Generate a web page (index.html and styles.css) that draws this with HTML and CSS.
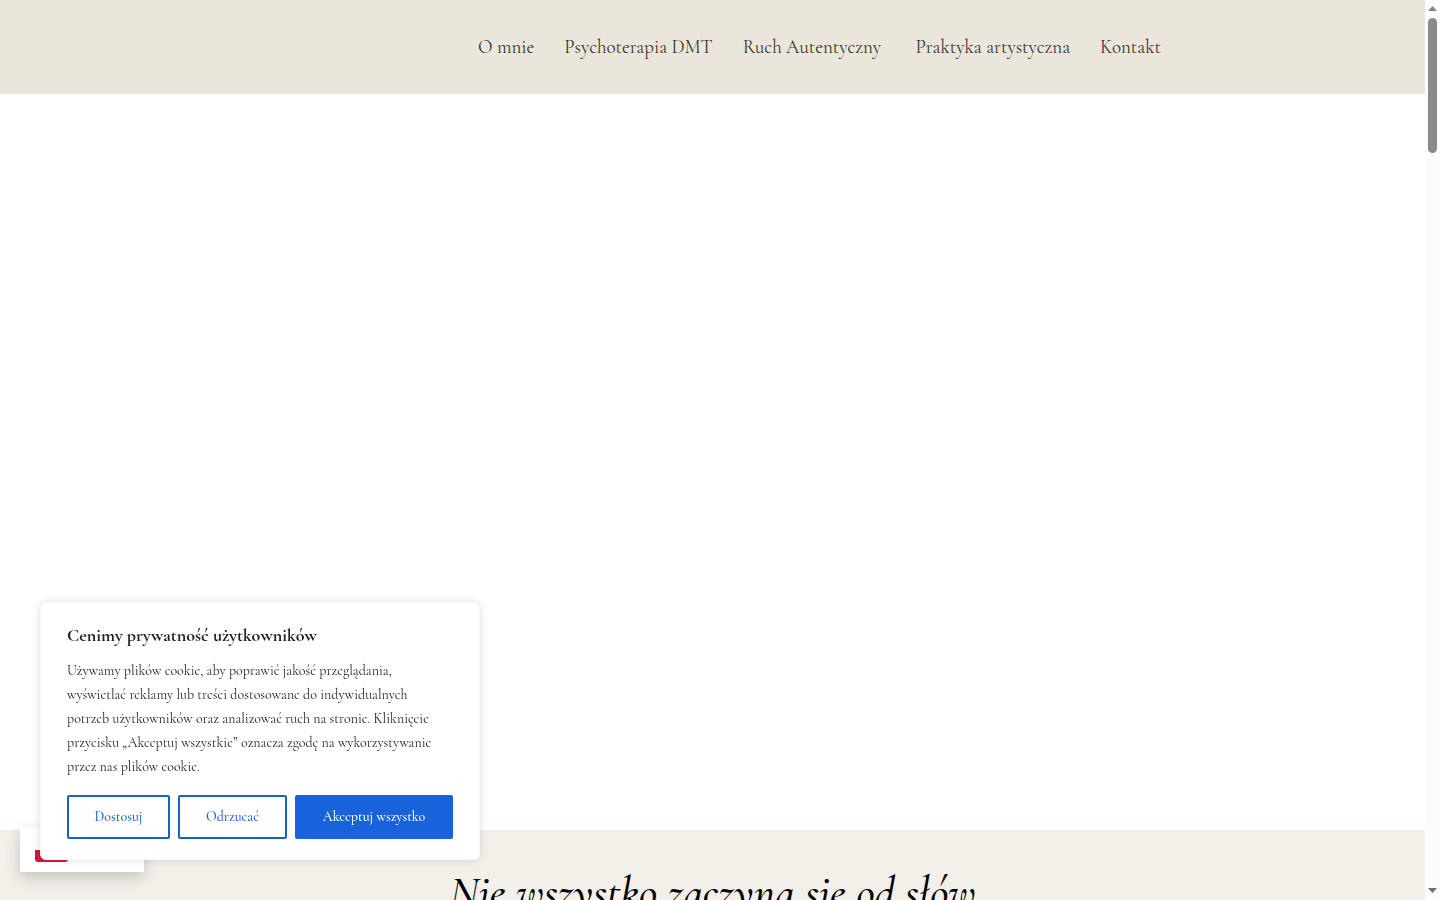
FILE: index.html
```html
<!DOCTYPE html>
<html lang="pl">
<head>
<meta charset="utf-8">
<title>Psychoterapia DMT</title>
<link rel="stylesheet" href="styles.css">
</head>
<body>
<div class="page">
  <header class="site-header">
    <nav class="menu" aria-label="Menu główne">
      <a href="#">O mnie</a>
      <a href="#">Psychoterapia DMT</a>
      <a href="#">Ruch Autentyczny&nbsp;</a>
      <a href="#">Praktyka artystyczna</a>
      <a href="#">Kontakt</a>
    </nav>
  </header>
  <main class="main">
    <div class="hero"></div>
    <section class="intro">
      <h1>Nie wszystko zaczyna się od słów</h1>
    </section>
  </main>
</div>
<div class="scrollbar" aria-hidden="true">
  <svg width="15" height="15" viewBox="0 0 15 15"><path d="M3 11L7.500 6L12 11Z" fill="#858585"/></svg>
  <div class="thumb"></div>
  <svg class="down" width="15" height="15" viewBox="0 0 15 15"><path d="M3 3L7.500 8L12 3Z" fill="#707070"/></svg>
</div>
<aside class="language">
  <svg width="33" height="24" viewBox="0 0 33 24"><rect width="33" height="24" rx="3" fill="#fff"/><path d="M0 12H33V21Q33 24 30 24H3Q0 24 0 21Z" fill="#dc143c"/></svg>
</aside>
<section class="consent" aria-labelledby="consent-title">
  <h2 id="consent-title">Cenimy prywatność użytkowników</h2>
  <p>Używamy plików cookie, aby poprawić jakość przeglądania,<br>wyświetlać reklamy lub treści dostosowane do indywidualnych<br>potrzeb użytkowników oraz analizować ruch na stronie. Kliknięcie<br>przycisku „Akceptuj wszystkie” oznacza zgodę na wykorzystywanie<br>przez nas plików cookie.</p>
  <div class="actions">
    <button type="button">Dostosuj</button>
    <button type="button">Odrzucać</button>
    <button type="button" class="primary">Akceptuj wszystko</button>
  </div>
</section>
</body>
</html>
```
FILE: styles.css
```css
* { box-sizing: border-box; }
body {
  margin: 0;
  height: 100vh;
  overflow: hidden;
  display: flex;
  background: #fff;
  font-family: "Cormorant Garamond", Cormorant, "Liberation Serif", serif;
}
.page {
  flex: 1;
  min-width: 0;
  display: flex;
  flex-direction: column;
}
.site-header {
  background: #eae6dc;
  padding: 32px 264px 32px 24px;
}
.menu {
  display: flex;
  justify-content: flex-end;
  gap: 30px;
}
.menu a {
  color: #37342d;
  font-size: 19px;
  line-height: 30px;
  text-decoration: none;
  white-space: nowrap;
}
.main {
  flex: 1;
  min-height: 0;
  display: flex;
  flex-direction: column;
}
.hero { flex: 1; }
.intro {
  height: 70px;
  padding-top: 40px;
  background: #f3f0ea;
  overflow: hidden;
}
.intro h1 {
  margin: 0;
  font-size: 45px;
  font-style: italic;
  font-weight: 500;
  line-height: 46px;
  text-align: center;
  color: #000;
}
.scrollbar {
  width: 15px;
  display: flex;
  flex-direction: column;
  background: #fcfcfc;
}
.scrollbar svg { display: block; }
.thumb {
  width: 9px;
  height: 15%;
  margin: 3px 3px auto;
  border-radius: 5px;
  background: #8b8b8b;
}
.language {
  position: fixed;
  left: 20px;
  bottom: 28px;
  width: 124px;
  height: 45px;
  padding: 11px 15px 10px;
  background: #fff;
  box-shadow: 0 5px 15px rgba(0, 0, 0, 0.2);
}
.language svg { display: block; }
.consent {
  position: fixed;
  left: 40px;
  bottom: 40px;
  width: 440px;
  padding: 20px 26px;
  border: 1px solid #f8f8f8;
  border-radius: 6px;
  background: #fff;
  box-shadow: 0 0 10px rgba(0, 0, 0, 0.13);
}
.consent h2 {
  margin: 0 0 12px;
  font-size: 18px;
  line-height: 24px;
  color: #212121;
}
.consent p {
  margin: 0 0 16px;
  font-size: 14px;
  line-height: 24px;
  color: #212121;
  white-space: nowrap;
}
.actions {
  display: grid;
  grid-template-columns: 103fr 109fr 158fr;
  gap: 8px;
}
.actions button {
  height: 44px;
  padding: 0 0 2px;
  border: 2px solid #1863bf;
  border-radius: 2px;
  background: #fff;
  color: #1863dc;
  font: inherit;
  font-size: 14px;
  font-weight: 500;
  cursor: pointer;
}
.actions .primary {
  border-color: #1863dc;
  background: #1863dc;
  color: #fff;
}
```
